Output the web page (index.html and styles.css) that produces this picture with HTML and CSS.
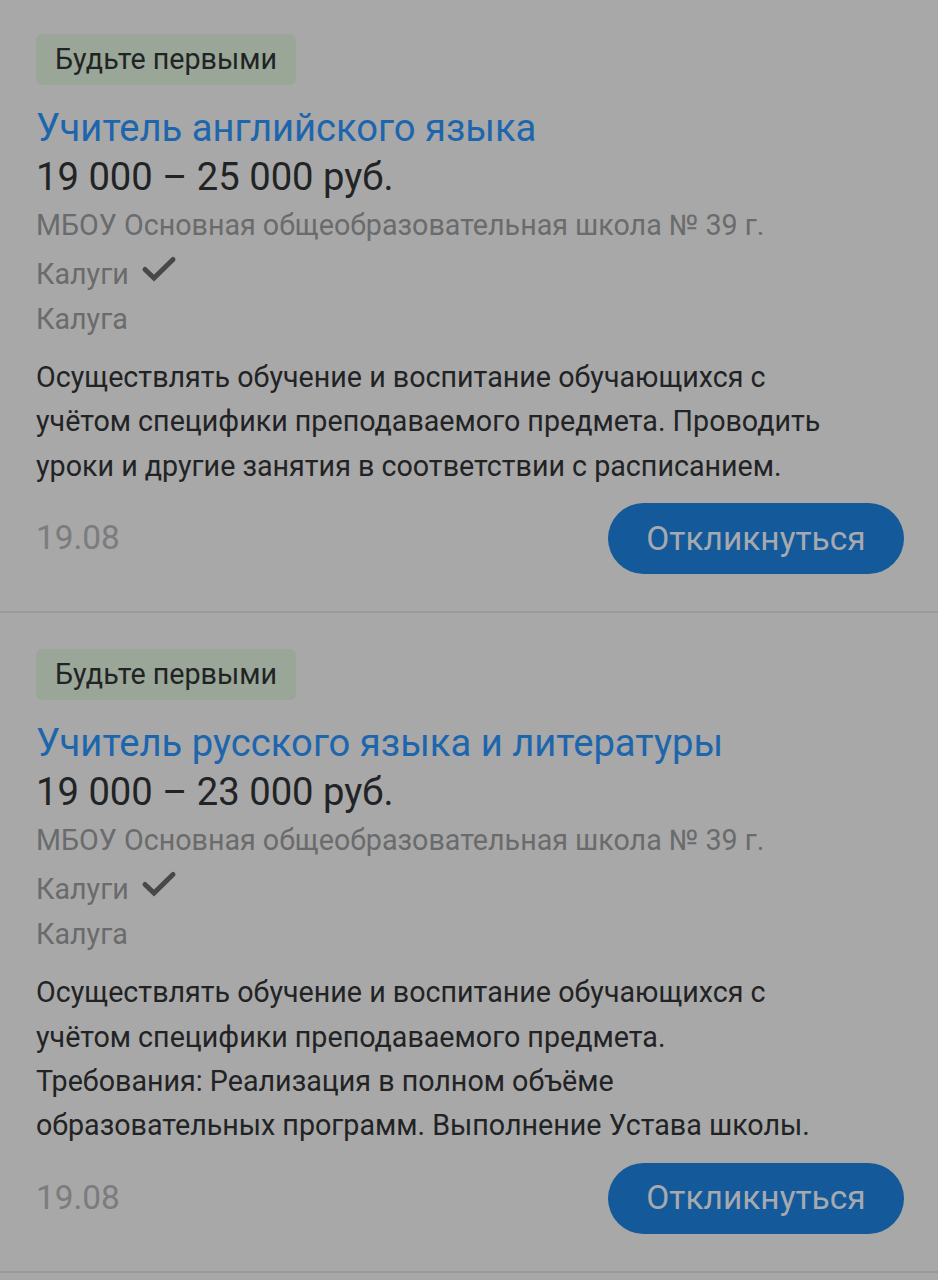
FILE: index.html
```html
<!DOCTYPE html>
<html lang="ru">
<head>
<meta charset="utf-8">
<title>Вакансии</title>
<link rel="stylesheet" href="styles.css">
</head>
<body>
<main class="list">
<article class="card">
<span class="badge">Будьте первыми</span>
<h2 class="title">Учитель английского языка</h2>
<p class="salary">19 000 – 25 000 руб.</p>
<p class="company">МБОУ Основная общеобразовательная школа № 39 г.</p>
<p class="company-end">Калуги <svg class="check" viewBox="0 0 36 28"><path d="M4 14.5l9 8.5L32 4.5"/></svg></p>
<p class="city">Калуга</p>
<p class="text">Осуществлять обучение и воспитание обучающихся с<br>учётом специфики преподаваемого предмета. Проводить<br>уроки и другие занятия в соответствии с расписанием.</p>
<footer class="foot"><time>19.08</time><button class="reply">Откликнуться</button></footer>
</article>
<article class="card">
<span class="badge">Будьте первыми</span>
<h2 class="title">Учитель русского языка и литературы</h2>
<p class="salary">19 000 – 23 000 руб.</p>
<p class="company">МБОУ Основная общеобразовательная школа № 39 г.</p>
<p class="company-end">Калуги <svg class="check" viewBox="0 0 36 28"><path d="M4 14.5l9 8.5L32 4.5"/></svg></p>
<p class="city">Калуга</p>
<p class="text">Осуществлять обучение и воспитание обучающихся с<br>учётом специфики преподаваемого предмета.<br>Требования: Реализация в полном объёме<br>образовательных программ. Выполнение Устава школы.</p>
<footer class="foot"><time>19.08</time><button class="reply">Откликнуться</button></footer>
</article>
</main>
</body>
</html>
```
FILE: styles.css
```css
* { box-sizing: border-box; margin: 0; padding: 0; }
body { background: #a8a8a8; font-family: Roboto, sans-serif; color: #222325; overflow: hidden; height: 1280px; }
.list { padding-top: 34px; }
.card { display: flex; flex-direction: column; padding: 0 34px 37px 36px; border-bottom: 2px solid #9a9a9a; margin-bottom: 36px; white-space: nowrap; }
.badge { align-self: flex-start; width: 260px; height: 51px; padding: 0 19px; line-height: 50px; font-size: 28.66px; background: #9aa798; border-radius: 6px; }
.title { margin-top: 19px; line-height: 48px; font-size: 38.2px; font-weight: 400; color: #1d65ad; }
.salary { height: 50px; line-height: 51px; font-size: 38.2px; }
.company, .company-end, .city { font-size: 28.66px; color: #6a6b6c; }
.company { height: 47px; line-height: 46px; }
.company-end { display: flex; height: 48px; line-height: 51px; }
.city { line-height: 44px; }
.check { width: 36px; height: 28px; margin: 6px 0 0 12.5px; fill: none; stroke: #484848; stroke-width: 5; stroke-linecap: round; }
.text { margin-top: 14px; line-height: 44.4px; font-size: 28.66px; }
.foot { display: flex; justify-content: space-between; height: 71px; margin-top: 15px; line-height: 69px; font-size: 33.4px; color: #7b7c7d; }
.reply { width: 296px; height: 71px; border: 0; border-radius: 36px; background: #145a9a; color: #a6aab0; font: 33.5px/70px Roboto, sans-serif; }
```
